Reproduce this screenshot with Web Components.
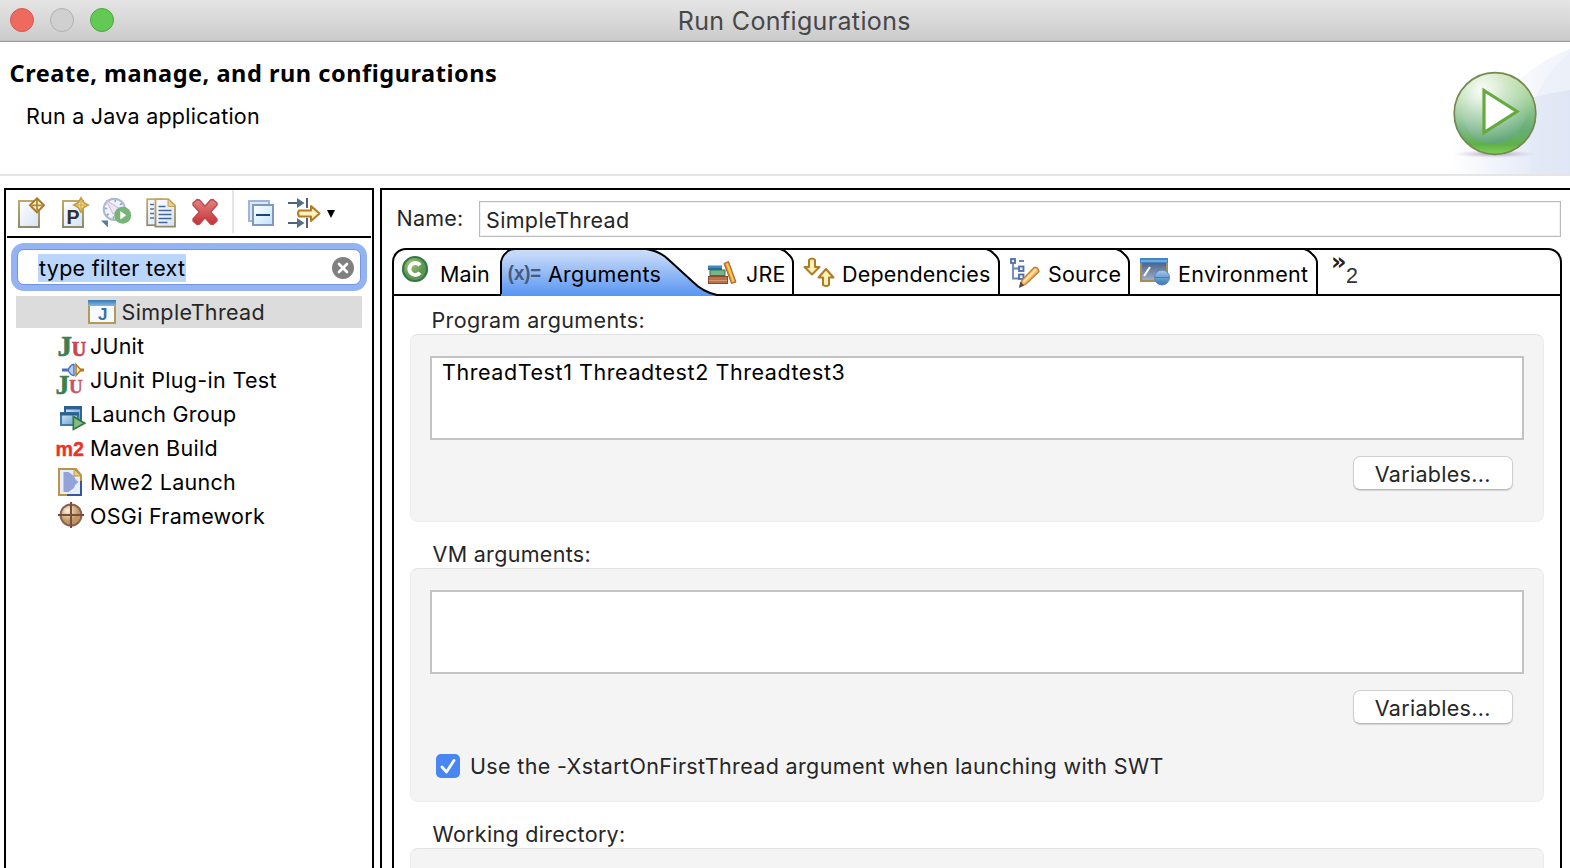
<!DOCTYPE html>
<html lang="en">
<head>
<meta charset="utf-8">
<title>Run Configurations</title>
<style>
html,body{margin:0;height:868px;overflow:hidden;background:#fff}
body{font-family:Inter,"Liberation Sans",sans-serif;font-size:21.5px;color:#000}
</style>
</head>
<body>
<run-dialog></run-dialog>
<script>
const define=(name,html,setup)=>{
  const t=document.createElement('template');t.innerHTML=html;
  customElements.define(name,class extends HTMLElement{
    constructor(){super();this.attachShadow({mode:'open'}).append(t.content.cloneNode(true));}
    connectedCallback(){if(setup)setup(this,this.shadowRoot);}
  });
};

/* One line of text whose inked width is given by w: tracking is set to fill it. */
const ctx=document.createElement('canvas').getContext('2d');
define('fit-text',`<style>:host{display:block;flex:none;height:26px;line-height:26px;white-space:pre}span{display:inline-block}</style><span><slot></slot></span>`,(el,root)=>{
  const w=+el.getAttribute('w'),s=root.querySelector('span'),cs=getComputedStyle(el),text=root.querySelector('slot').assignedNodes({flatten:true}).map(n=>n.textContent).join('');
  if(text.length<2)return;
  ctx.font=`${cs.fontWeight} ${cs.fontSize} ${cs.fontFamily}`;
  const m=ctx.measureText(text);
  el.style.width=w+'px';
  s.style.marginLeft=m.actualBoundingBoxLeft+'px';
  s.style.letterSpacing=(w-m.actualBoundingBoxLeft-m.actualBoundingBoxRight)/(text.length-1)+'px';
});

const sheet='<linearGradient id="s" x2="1" y2="1"><stop stop-color="#fff"/><stop offset="1" stop-color="#d5e3f5"/></linearGradient><linearGradient id="b" x2="0" y2="1"><stop stop-color="#c2a866"/><stop offset="1" stop-color="#8f8a6c"/></linearGradient>';
const serif='font-family="Liberation Serif" font-weight="700"';
const ICONS={
new:`<defs>${sheet}</defs><rect x="3" y="4" width="20" height="26" fill="url(#s)" stroke="url(#b)" stroke-width="2"/><path d="M21 1.3L28 8.3L21 15.3L14 8.3Z" fill="#fff6d8" stroke="#a67c27" stroke-width="2"/><path d="M21 3v10.600M16 8.300h10" stroke="#b08735" stroke-width="1.800"/>`,
proto:`<defs>${sheet}</defs><rect x="3" y="4" width="20" height="26" fill="url(#s)" stroke="url(#b)" stroke-width="2"/><text x="6.500" y="26.500" font-family="Liberation Sans" font-weight="700" font-size="19.500" fill="#303236">P</text><path d="M21 1L23.500 5.500L28 8L23.500 10.500L21 15L18.500 10.500L14 8L18.500 5.500Z" fill="#fff0ae" stroke="#c79c3c" stroke-width="1.800"/><path d="M21 4v8M17 8h8" stroke="#d3ad4f" stroke-width="1.500"/>`,
profile:`<circle cx="10.300" cy="12.300" r="10.600" fill="#f0f3fa" stroke="#aab8d2" stroke-width="2"/><circle cx="10.300" cy="12.300" r="8.300" fill="none" stroke="#8da1c4" stroke-width="2.400" stroke-dasharray="1.600 4.900"/><path d="M2 3L16 12L9 17Z" fill="#eee4f4" stroke="#c9b6d4"/><path d="M-3 23.500h7v7Z" fill="#5578ad"/><circle cx="18.700" cy="18.300" r="8.500" fill="#78b477"/><path d="M16.300 14v8.600l6-4.300Z" fill="#fff"/>`,
copy:`<defs>${sheet}</defs><rect x="-.8" y="2.200" width="15" height="26" fill="url(#s)" stroke="url(#b)" stroke-width="1.800"/><path d="M2 7.500h4M2 12h4M2 16.500h4M2 21h4" stroke="#54739f" stroke-width="1.700"/><path d="M7.500 2.200h13l6.500 6.500v21h-19.500Z" fill="url(#s)" stroke="url(#b)" stroke-width="1.800"/><path d="M20 2v7.500h7.500Z" fill="#e6cf8d" stroke="#c2a460"/><path d="M10.500 9.500h7M10.500 13.500h13M10.500 17.500h13M10.500 21.500h13M10.500 25.500h9" stroke="#45689b" stroke-width="1.700"/>`,
del:`<defs><linearGradient id="r" x2="0" y2="1"><stop stop-color="#e08580"/><stop offset="1" stop-color="#ca2f36"/></linearGradient></defs><path d="M1 6L5 2.500L7.500 3L13 9.300L18.500 3L21 2.500L25 6L25 8L18.700 15L25 22L25 24L21 27.500L18.500 27L13 20.700L7.500 27L5 27.500L1 24L1 22L7.300 15L1 8Z" fill="url(#r)" stroke="#b9474b" stroke-width="1.300" stroke-linejoin="round"/>`,
collapse:`<defs><linearGradient id="c" x2="1" y2="1"><stop stop-color="#fff"/><stop offset="1" stop-color="#bfe4f8"/></linearGradient></defs><rect x="3" y="4" width="20" height="20" fill="#d9e9f7" stroke="#9aaed0" stroke-width="1.800"/><rect x="7" y="8" width="20" height="20" fill="url(#c)" stroke="#8198bd" stroke-width="2"/><path d="M10 18h14" stroke="#18466f" stroke-width="2"/>`,
filter:`<path d="M2 6h10M2 26h10" stroke="#4d6377" stroke-width="2"/><path d="M11 1L18.500 6L11 11ZM11 21L18.500 26L11 31Z" fill="#4f7088"/><path d="M21 1v10M21 21v10" stroke="#454e66" stroke-width="1.800"/><path d="M13 13.500h12v-4.500l8.500 7.500l-8.500 7.500v-4.500h-12q-2-3 0-6Z" fill="#fff0bd" stroke="#b07d25" stroke-width="2" stroke-linejoin="round"/>`,
app:`<defs><linearGradient id="t" x2="0" y2="1"><stop stop-color="#3978b4"/><stop offset="1" stop-color="#84b9e5"/></linearGradient></defs><rect x="3" y="6" width="26" height="22" fill="#f6fbff" stroke="#b39a55" stroke-width="2"/><rect x="2" y="5" width="28" height="6" fill="url(#t)"/><text x="12" y="25" font-family="Liberation Sans" font-weight="700" font-size="17" fill="#3c6ea3">J</text>`,
junit:`<text ${serif} x="1.500" y="26.500" font-size="29" fill="#3e7f50" stroke="#3e7f50" stroke-width=".7">J</text><text ${serif} x="15.800" y="26.500" font-size="20" fill="#c84450" stroke="#c84450" stroke-width=".7">U</text>`,
plug:`<text ${serif} x="-.5" y="30.500" font-size="28" fill="#3e7f50" stroke="#3e7f50" stroke-width=".6">J</text><text ${serif} x="13" y="30" font-size="19" fill="#c9545e" stroke="#c9545e" stroke-width=".4">U</text><path d="M6 7h8" stroke="#4a6cb8" stroke-width="3"/><path d="M12 7q3-6 6-5.500v11q-3 .5-6-5.500Z" fill="#b8cdf0" stroke="#4f73b8" stroke-width="1.400"/><path d="M20 1.500L25 7L20 12.500Z" fill="#fde7a8" stroke="#ad7c22" stroke-width="1.500"/><path d="M24 7h4" stroke="#ad7c22" stroke-width="3"/>`,
group:`<defs><linearGradient id="g" x2="1" y2="1"><stop stop-color="#d9ecfa"/><stop offset="1" stop-color="#5b9cc9"/></linearGradient></defs><rect x="9" y="10" width="16" height="13" fill="url(#g)" stroke="#2f6796" stroke-width="2"/><path d="M8 11h18" stroke="#2d608f" stroke-width="3"/><rect x="5" y="16" width="17" height="12" fill="url(#g)" stroke="#3e7ba8" stroke-width="2"/><path d="M4 17h19" stroke="#2d608f" stroke-width="3"/><path d="M17.300 19.500L28.800 26.200L17.300 32.500Z" fill="#83bb7d" stroke="#2d7544" stroke-width="1.600"/>`,
m2:`<text x="-.5" y="24.800" font-family="Liberation Sans" font-weight="700" font-size="20.500" textLength="28.500" lengthAdjust="spacingAndGlyphs" fill="#e93529" stroke="#e93529" stroke-width=".4">m2</text>`,
mwe:`<path d="M3 4h17l5 6v20h-22Z" fill="#e7edf9" stroke="#b99549" stroke-width="2"/><path d="M25 16v14h-14" fill="none" stroke="#3b559c" stroke-width="2"/><path d="M18 4l7 7h-7Z" fill="#eac981" stroke="#bb9547"/><path d="M7.500 7h5l5.500 4q1 4 4.500 6q-3.500 2-4.500 6l-5.500 4h-5Z" fill="#94a2da"/>`,
osgi:`<defs><radialGradient id="o" cx=".35" cy=".3"><stop stop-color="#fff3dc"/><stop offset="1" stop-color="#bf9660"/></radialGradient></defs><circle cx="15" cy="16" r="10.500" fill="url(#o)" stroke="#8b6252" stroke-width="2"/><path d="M15 3v26M2 16h26" stroke="#7a4b3f" stroke-width="2"/>`,
main:`<defs><radialGradient id="m" cx=".35" cy=".3"><stop stop-color="#a3c37d"/><stop offset="1" stop-color="#5c964f"/></radialGradient></defs><circle cx="15" cy="14" r="12" fill="url(#m)" stroke="#34784a" stroke-width="2.200"/><path d="M20 17.800A6 6 0 1 1 20 10.200" fill="none" stroke="#fff" stroke-width="4"/>`,
args:`<text x="-.3" y="21.500" font-family="Liberation Sans" font-weight="700" font-size="20" textLength="33.500" lengthAdjust="spacingAndGlyphs" fill="#465a7c">(x)=</text>`,
jre:`<rect x="2" y="8.500" width="14" height="4.500" fill="#4088c2"/><path d="M2 12h14" stroke="#235f91" stroke-width="1.500"/><rect x="4" y="13" width="15" height="5.500" fill="#76b788" stroke="#2f7557"/><rect x="2.500" y="19.500" width="19" height="7" fill="#bd714b" stroke="#91472e"/><path d="M3 23.500h18" stroke="#d69975"/><path d="M18 6.500l4.500-2l7.500 20.500l-4.500 1.500Z" fill="#dc8d36" stroke="#ae5e2d"/><path d="M21 6.500l6.500 18" stroke="#f8d052" stroke-width="2"/>`,
deps:`<g fill="#fff0b5" stroke="#ae7c26" stroke-width="2" stroke-linejoin="round"><path d="M6 3q3-3 6 0v7h4.500L9 17.500L1.500 10H6Z"/><path d="M20 28q3 2 6 0v-7.500h4.500L23 12L15.500 20.500h4.500Z"/></g>`,
source:`<path d="M5 8v14.500h6M5 12.500h6M11 5h5" fill="none" stroke="#6b85b8" stroke-width="1.800"/><g fill="#e9f0fa" stroke="#4d6eab" stroke-width="1.800"><rect x="3" y="3" width="4" height="4"/><rect x="11" y="10.500" width="4.500" height="4.500"/><rect x="11" y="18.500" width="4.500" height="4.500"/></g><path d="M26 11.500q4-1 5 4L18 28l-6 3l2-7Z" fill="#f6ba68" stroke="#be7d34" stroke-width="1.300"/><path d="M28 13.500L15.500 26" stroke="#ffe3a9" stroke-width="2"/><path d="M11 31.500l5-2l-3.500-4Z" fill="#59463d"/>`,
env:`<defs><linearGradient id="e" x2="0" y2="1"><stop stop-color="#3d547e"/><stop offset="1" stop-color="#a3b1ca"/></linearGradient><linearGradient id="q" x2="0" y2="1"><stop stop-color="#a8c9ea"/><stop offset="1" stop-color="#3778b9"/></linearGradient></defs><rect x="3" y="4" width="26" height="22" fill="url(#e)" stroke="#a58d53" stroke-width="2"/><rect x="2" y="3" width="28" height="5" fill="#4087c4"/><path d="M3 6h26" stroke="#a6cde9"/><path d="M6 21L12 12" stroke="#fff" stroke-width="2"/><circle cx="24" cy="22.500" r="7.500" fill="url(#q)" stroke="#5687b8"/><path d="M17 22.500h14" stroke="#3f7fbd"/>`
};
define('ui-icon',`<style>:host{display:block;flex:none;width:32px;height:32px}svg{display:block;overflow:visible}</style><svg width="32" height="34"></svg>`,(el,root)=>{root.querySelector('svg').innerHTML=ICONS[el.getAttribute('name')]||'';});

define('title-bar',`<style>
:host{display:grid;grid-template-columns:1fr auto 1fr;box-sizing:border-box;height:42px;background:linear-gradient(#e5e5e5,#cbcbcb);border-bottom:1px solid #9c9c9c;box-shadow:inset 0 -1px #c0c0c0;color:#474747}
.l{display:flex;gap:16px;padding:8px 10px}i{box-sizing:border-box;width:24px;height:24px;border-radius:50%;border:1px solid #d9574e;background:#ee6a5f}i:nth-child(2){background:#d0d0d0;border-color:#b0b0b0}i:nth-child(3){background:#62c955;border-color:#4ba93f}
fit-text{margin:8px -9.500px 0 9.500px;font-size:25px}</style><div class="l"><i></i><i></i><i></i></div><fit-text w="229.500"><slot></slot></fit-text>`);

define('dialog-header',`<style>
:host{display:flex;justify-content:space-between;box-sizing:border-box;height:134px;border-bottom:2px solid #e5e5e5;background:#fff}
.h{font-family:"Noto Sans",sans-serif;font-weight:700;font-size:23.500px;margin:18px 0 0 10.500px}.s{margin:17px 0 0 27px}svg{display:block}</style>
<div><fit-text class="h" w="485.500">Create, manage, and run configurations</fit-text><fit-text class="s" w="232">Run a Java application</fit-text></div>
<svg width="190" height="132" viewBox="1380 42 190 132"><defs>
<linearGradient id="w" gradientUnits="userSpaceOnUse" x1="1450" x2="1570" y1="0" y2="0"><stop stop-color="#e0e7f6" stop-opacity="0"/><stop offset="1" stop-color="#dfe6f5"/></linearGradient>
<linearGradient id="v" gradientUnits="userSpaceOnUse" x1="1460" x2="1570" y1="0" y2="0"><stop stop-color="#f8f9fd" stop-opacity="0"/><stop offset=".6" stop-color="#f6f8fd"/><stop offset="1" stop-color="#f0f3fb"/></linearGradient>
<linearGradient id="k" x2="0" y2="1"><stop stop-color="#b5d99b"/><stop offset=".3" stop-color="#a0d095"/><stop offset=".7" stop-color="#66ad76"/><stop offset=".88" stop-color="#60b04b"/><stop offset="1" stop-color="#80d052"/></linearGradient>
<radialGradient id="hl" cx=".35" cy=".22" r=".65"><stop stop-color="#fff" stop-opacity=".95"/><stop offset=".45" stop-color="#fff" stop-opacity=".45"/><stop offset="1" stop-color="#fff" stop-opacity="0"/></radialGradient>
<linearGradient id="n" x2="0" y2="1"><stop stop-color="#b4d9a8" stop-opacity=".5"/><stop offset="1" stop-color="#5ea578"/></linearGradient>
<radialGradient id="sh"><stop stop-color="#a59bb0"/><stop offset="1" stop-color="#cfc8dc" stop-opacity="0"/></radialGradient></defs>
<path d="M1450 174Q1500 75 1570 49V174Z" fill="url(#v)"/><path d="M1530 112Q1542 75 1570 53V174H1530Z" fill="#e8eef9" opacity=".6"/><path d="M1450 174V130Q1510 98 1570 90V174Z" fill="url(#w)"/>
<ellipse cx="1495" cy="154" rx="42" ry="4" fill="url(#sh)"/>
<circle cx="1495" cy="113.500" r="40.800" fill="url(#k)"/><circle cx="1494" cy="113" r="31" fill="url(#n)"/><circle cx="1495" cy="113.500" r="40.800" fill="url(#hl)" stroke="#74884f" stroke-width="1.700"/>
<path d="M1484 90.500L1517 111.500L1484 132.500Z" fill="#fff" stroke="#65aa3d" stroke-width="3.200"/></svg>`);

define('tool-bar',`<style>
:host{display:flex;box-sizing:border-box;height:48px;margin:0 1px;padding:7px 0 0 9px;border-bottom:2px solid #000}
ui-icon+ui-icon{margin-left:12px}.sep{width:2px;height:43px;margin:-7px 12px 0 8px;background:#e6e6e6}ui-icon+ui-icon.f{margin-left:8px}
b{width:0;height:0;margin:13px 0 0 8.500px;border:4.800px solid transparent;border-top:8px solid #000;border-bottom:0}</style>
<ui-icon name="new"></ui-icon><ui-icon name="proto"></ui-icon><ui-icon name="profile"></ui-icon><ui-icon name="copy"></ui-icon><ui-icon name="del"></ui-icon><div class="sep"></div><ui-icon name="collapse"></ui-icon><ui-icon class="f" name="filter"></ui-icon><b></b>`);

define('search-field',`<style>
:host{display:flex;align-items:center;justify-content:space-between;box-sizing:border-box;height:36px;margin:11px 11px 10px;padding:2px 6px 0 20px;border:1px solid #7494dc;border-radius:7px;box-shadow:0 0 0 6px #94b3f5;background:#fff}
.sel{box-sizing:border-box;background:#bad6fb;height:28px;padding:1px 1px 0}svg{display:block;margin-top:-1px}</style>
<div class="sel"><fit-text w="146"><slot></slot></fit-text></div><svg width="22" height="22"><circle cx="11" cy="11" r="11" fill="#808080"/><path d="M7 7l8 8M15 7l-8 8" stroke="#fff" stroke-width="2.700" stroke-linecap="round"/></svg>`);

define('tree-item',`<style>
:host{display:flex;align-items:center;height:34px;padding-left:40px}
ui-icon{height:34px;margin-right:3px}:host([selected]){height:32px;margin:1px 0;padding-left:70px;background:#dcdcdc;color:#262626}:host([selected]) ui-icon{height:32px;margin-top:-2px;margin-right:4.500px}</style><ui-icon></ui-icon><fit-text></fit-text>`,
(el,root)=>{const f=root.querySelector('fit-text'),n=f.cloneNode();n.setAttribute('w',el.getAttribute('w'));n.textContent=el.getAttribute('label');f.replaceWith(n);
const i=root.querySelector('ui-icon'),k=document.createElement('ui-icon');k.setAttribute('name',el.getAttribute('icon'));i.replaceWith(k);});

define('launch-list',`<style>:host{display:block;box-sizing:border-box;width:370px;height:680px;margin-left:4px;border:2px solid #000;border-bottom:0}.t{display:flow-root;margin:0 10px}</style>
<tool-bar></tool-bar><search-field>type filter text</search-field><div class="t">
<tree-item selected icon="app" label="SimpleThread" w="141"></tree-item><tree-item icon="junit" label="JUnit" w="53"></tree-item><tree-item icon="plug" label="JUnit Plug-in Test" w="185.500"></tree-item><tree-item icon="group" label="Launch Group" w="145"></tree-item><tree-item icon="m2" label="Maven Build" w="125.500"></tree-item><tree-item icon="mwe" label="Mwe2 Launch" w="144"></tree-item><tree-item icon="osgi" label="OSGi Framework" w="174"></tree-item></div>`);

define('tab-item',`<style>
:host{display:flex;position:relative;box-sizing:border-box;height:44px;flex:none}
.edge{position:absolute;right:0;top:-2px;display:block}:host([plain]) .edge{display:none}
.sel{display:none;position:absolute;left:0;top:-2px}:host([selected]) .sel{display:block}:host([selected]) .edge{display:none}</style>
<svg class="sel" width="222" height="48"><defs><linearGradient id="a" x2="0" y2="1"><stop stop-color="#cdddf8"/><stop offset=".15" stop-color="#c1d6f8"/><stop offset="1" stop-color="#5795f2"/></linearGradient></defs><path d="M1 48V14Q2 8 6 5Q9 1 15 1H148Q160 3 169 12L193 34Q203 44 216 47V48Z" fill="url(#a)"/><path d="M1 46V14Q2 8 6 5Q9 1 15 1H146Q160 3 169 12L193 34Q203 44 217 47" fill="none" stroke="#000" stroke-width="2"/></svg>
<svg class="edge" width="14" height="46"><path d="M0 1Q5 2 8 6Q13 10 13 15V46" fill="none" stroke="#000" stroke-width="2"/></svg>
<slot></slot>`);

define('tab-strip',`<style>
:host{display:flex;box-sizing:border-box;height:48px;border:2px solid #000;border-radius:14px 14px 0 0}
.more{color:#333;width:40px;margin:6px 0 0 13px;font-family:"Liberation Sans"}
.c{display:block;font-family:"DejaVu Sans";font-size:24px;line-height:12px;font-weight:700;height:12px;color:#222}.n{display:block;font-size:21.500px;line-height:16px;margin:0 0 0 15px}
tab-item:nth-of-type(1){width:106px}tab-item:nth-of-type(2){width:200px}tab-item:nth-of-type(3){width:94px}tab-item:nth-of-type(4){width:206px}tab-item:nth-of-type(5){width:130px}tab-item:nth-of-type(6){width:188px}
ui-icon,fit-text{position:relative}fit-text{margin-top:11px}ui-icon{margin-top:5px}</style>
<tab-item plain><ui-icon name="main" style="margin-left:6px"></ui-icon><fit-text w="48" style="margin-left:9px">Main</fit-text></tab-item>
<tab-item selected><ui-icon name="args" style="margin:8px 0 0 8px"></ui-icon><fit-text w="112.500" style="margin-left:8px">Arguments</fit-text></tab-item>
<tab-item><ui-icon name="jre" style="margin-left:6px;margin-top:7px"></ui-icon><fit-text w="37.500" style="margin-left:9px">JRE</fit-text></tab-item>
<tab-item><ui-icon name="deps" style="margin:7px 0 0 9px"></ui-icon><fit-text w="147" style="margin-left:8px">Dependencies</fit-text></tab-item>
<tab-item><ui-icon name="source" style="margin:6px 0 0 8px"></ui-icon><fit-text w="71.500" style="margin-left:9px">Source</fit-text></tab-item>
<tab-item><ui-icon name="env" style="margin-left:8px"></ui-icon><fit-text w="129" style="margin-left:9px">Environment</fit-text></tab-item>
<div class="more"><span class="c">»</span><span class="n">2</span></div>`);

define('push-button',`<style>:host{display:flex;justify-content:center;box-sizing:border-box;width:160px;height:34px;padding:4px 2px 0 0;border:1px solid #cfcfcf;border-bottom-color:#b8b8b8;border-radius:7px;background:#fff;box-shadow:0 1px 1px rgba(0,0,0,.12)}</style><fit-text w="114.500"><slot></slot></fit-text>`);

define('group-box',`<style>:host{display:flex;flex-direction:column;box-sizing:border-box;margin:0 16px;border:1px solid #ececec;border-top-color:#e2e2e2;border-radius:8px;background:#f4f4f4;padding:21px 19px 0}
.ta{box-sizing:border-box;height:84px;border:2px solid #c3c3c3;background:#fff;padding:1px 0 0 11px}::slotted(push-button){align-self:flex-end;margin:16px 11px 0 0}</style><div class="ta"><slot name="value"></slot></div><slot></slot>`);

define('config-editor',`<style>
:host{display:block;box-sizing:border-box;width:1190px;height:680px;margin-left:6px;padding-left:10px;border:2px solid #000;border-width:2px 0 0 2px;color:#262626}
.name{display:flex;height:58px}.name>fit-text{margin:15px 0 0 5.500px}.in{box-sizing:border-box;width:1082px;height:36px;margin:11px 0 0 16.500px;border:1px solid #b9b9b9;box-shadow:inset 0 0 0 1px #f2f2f2;padding:5px 7.500px}
.folder{width:1170px;box-sizing:border-box;color:#000}
.body{border:2px solid #000;border-width:0 2px;height:580px;color:#262626;overflow:hidden}
.lab{margin-left:38.500px}.chk{display:flex;margin:29px 0 0 6px;gap:11px}.chk svg{display:block;margin-top:1px}</style>
<div class="name"><fit-text w="64.500">Name:</fit-text><div class="in"><fit-text w="141">SimpleThread</fit-text></div></div>
<div class="folder"><tab-strip></tab-strip><div class="body">
<fit-text class="lab" w="211" style="margin-top:11px">Program arguments:</fit-text>
<group-box style="height:188px;margin-top:1px"><fit-text slot="value" w="400.500" style="color:#000">ThreadTest1 Threadtest2 Threadtest3</fit-text><push-button>Variables...</push-button></group-box>
<fit-text class="lab" w="157" style="margin-top:19px">VM arguments:</fit-text>
<group-box style="height:234px;margin-top:1px"><push-button>Variables...</push-button><div class="chk"><svg width="24" height="24"><rect width="24" height="24" rx="5" fill="#4a86f2"/><path d="M6 13l4.500 5L18 6.500" fill="none" stroke="#fff" stroke-width="2.800" stroke-linecap="round" stroke-linejoin="round"/></svg><fit-text w="691.500">Use the -XstartOnFirstThread argument when launching with SWT</fit-text></div></group-box>
<fit-text class="lab" w="191.500" style="margin-top:19px">Working directory:</fit-text>
<group-box style="height:188px;margin-top:1px"></group-box>
</div></div>`);

define('run-dialog',`<style>:host{display:block;width:1570px;height:868px;overflow:hidden;background:#fff}.m{display:flex;margin-top:12px}</style>
<title-bar>Run Configurations</title-bar><dialog-header></dialog-header><div class="m"><launch-list></launch-list><config-editor></config-editor></div>`);
</script>
</body>
</html>
